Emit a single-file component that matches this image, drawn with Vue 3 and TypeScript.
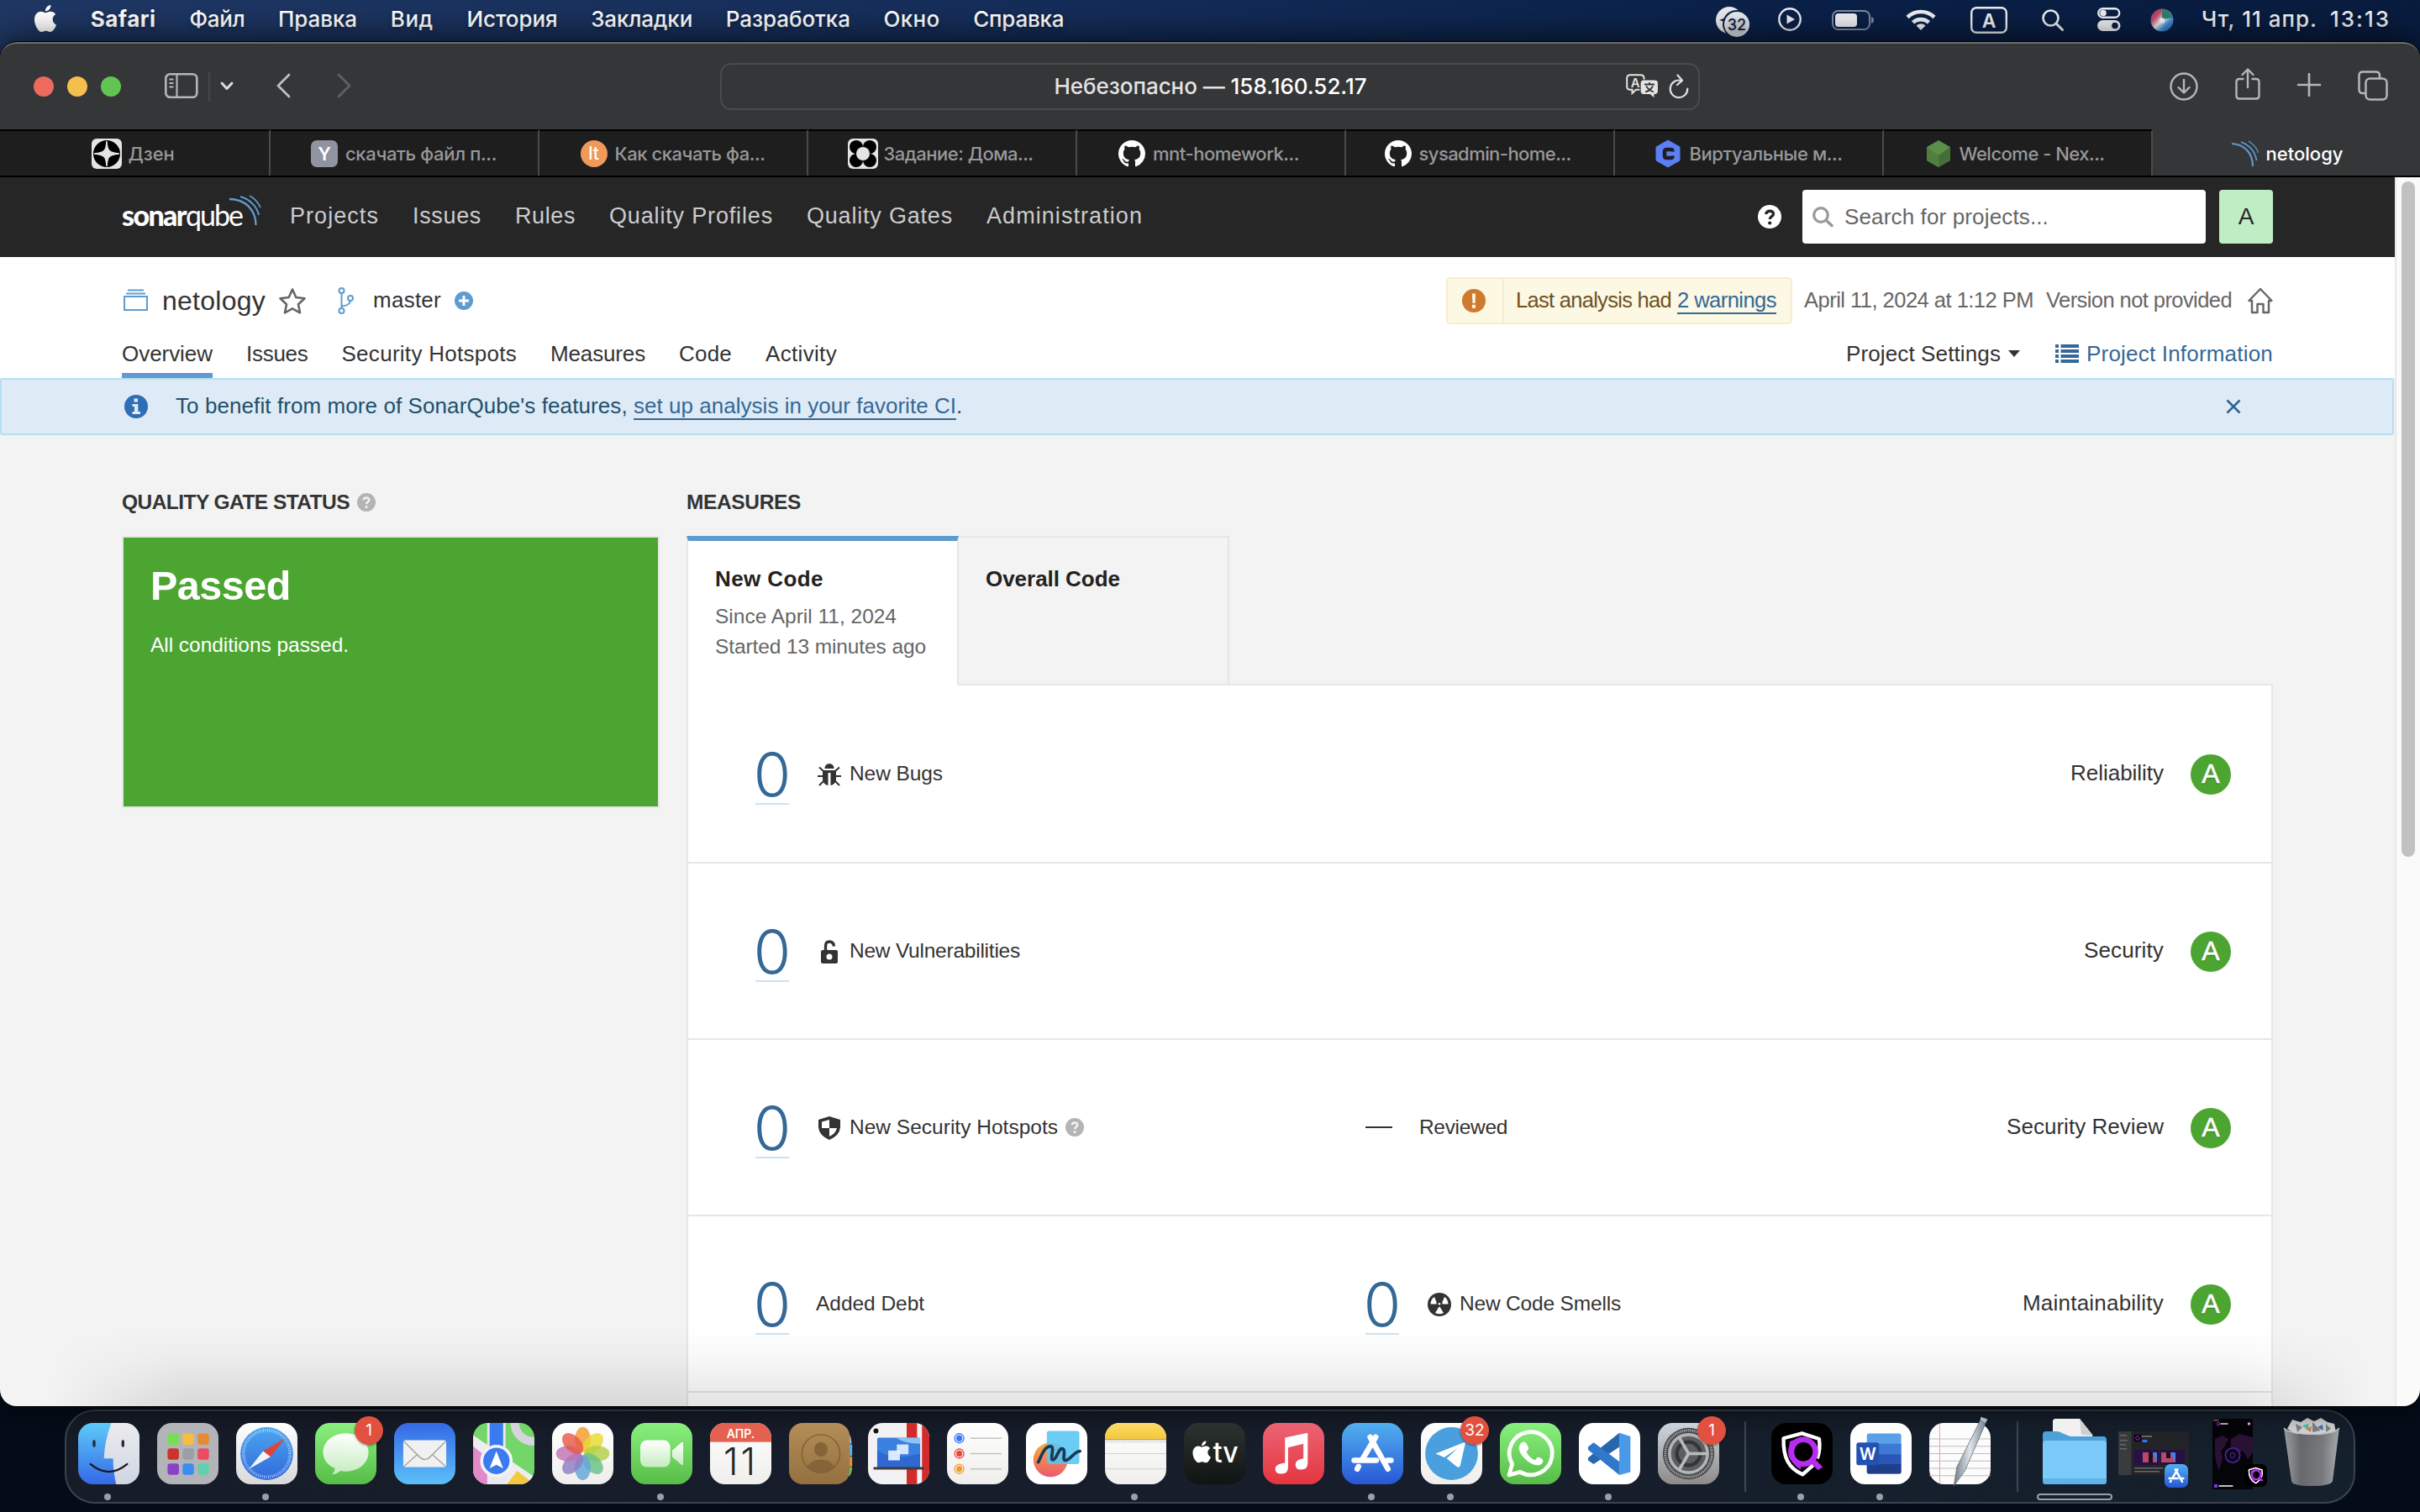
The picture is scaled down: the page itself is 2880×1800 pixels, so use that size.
<script setup lang="ts">
import type { Directive } from 'vue'

interface Label { text: string; width: number }
interface Measure { label: string; width: number; icon?: string; help?: boolean; empty?: boolean }
interface Row { left: Measure; right?: Measure; rating: Label }

// Spreads the letters of a label so that it takes the given width in pixels
const vFit: Directive<HTMLElement, number> = {
  mounted(el, { value }) {
    const count = (el.textContent ?? '').length
    const natural = el.getBoundingClientRect().width
    el.style.letterSpacing = `${(value - natural) / count}px`
  },
}

const menu: Label[] = [
  { text: 'Файл', width: 66 },
  { text: 'Правка', width: 94 },
  { text: 'Вид', width: 51 },
  { text: 'История', width: 108 },
  { text: 'Закладки', width: 121 },
  { text: 'Разработка', width: 148 },
  { text: 'Окно', width: 67 },
  { text: 'Справка', width: 108 },
]

const tabs = [
  { icon: 'zen', text: 'Дзен', width: 55 },
  { icon: 'y', text: 'скачать файл п...', width: 180 },
  { icon: 'lt', text: 'Как скачать фа...', width: 179 },
  { icon: 'flower', text: 'Задание: Дома...', width: 178 },
  { icon: 'github', text: 'mnt-homework...', width: 174 },
  { icon: 'github', text: 'sysadmin-home...', width: 181 },
  { icon: 'c', text: 'Виртуальные м...', width: 182 },
  { icon: 'nexus', text: 'Welcome - Nex...', width: 173 },
  { icon: 'waves', text: 'netology', width: 92 },
]

const mainNav: Label[] = [
  { text: 'Projects', width: 106 },
  { text: 'Issues', width: 82 },
  { text: 'Rules', width: 72 },
  { text: 'Quality Profiles', width: 195 },
  { text: 'Quality Gates', width: 174 },
  { text: 'Administration', width: 186 },
]

const projectNav: Label[] = [
  { text: 'Overview', width: 108 },
  { text: 'Issues', width: 73.5 },
  { text: 'Security Hotspots', width: 208.5 },
  { text: 'Measures', width: 113 },
  { text: 'Code', width: 63 },
  { text: 'Activity', width: 85 },
]

const rows: Row[] = [
  { left: { label: 'New Bugs', width: 111, icon: 'bug' }, rating: { text: 'Reliability', width: 111 } },
  { left: { label: 'New Vulnerabilities', width: 203, icon: 'lock' }, rating: { text: 'Security', width: 95 } },
  {
    left: { label: 'New Security Hotspots', width: 248, icon: 'shield', help: true },
    right: { label: 'Reviewed', width: 105, empty: true },
    rating: { text: 'Security Review', width: 187 },
  },
  {
    left: { label: 'Added Debt', width: 129 },
    right: { label: 'New Code Smells', width: 192, icon: 'smell' },
    rating: { text: 'Maintainability', width: 168 },
  },
]

const launchTiles = ['#77dd55', '#f6bd3f', '#e58a35', '#c9352b', '#9aa0a5', '#ea4d60', '#8c3fc9', '#3a8df2', '#63cfae']
const petals = ['#f39a2d', '#e8d92f', '#b3cf45', '#69bf88', '#63a6da', '#8d7cc4', '#c074b4', '#e8594a']
const reminders = ['#3478f6', '#e8483b', '#ef9a37']
const gearSpokes = [0, 120, 240]
</script>

<template>
  <div class="desktop">
    <svg class="defs" aria-hidden="true">
      <defs>
        <clipPath id="tile"><rect width="100" height="100" rx="24" /></clipPath>
        <linearGradient id="gFinder" x2="0" y2="1"><stop stop-color="#5ecbf8" /><stop offset="1" stop-color="#3468e8" /></linearGradient>
        <linearGradient id="gFace" x2="0" y2="1"><stop stop-color="#ececee" /><stop offset="1" stop-color="#cfd6e2" /></linearGradient>
        <linearGradient id="gWhite" x2="0" y2="1"><stop stop-color="#ffffff" /><stop offset="1" stop-color="#d9d9da" /></linearGradient>
        <linearGradient id="gPaper" x2="0" y2="1"><stop stop-color="#ffffff" /><stop offset="1" stop-color="#efeeec" /></linearGradient>
        <linearGradient id="gBlue" x2="0" y2="1"><stop stop-color="#4ba6ee" /><stop offset="1" stop-color="#3269dc" /></linearGradient>
        <linearGradient id="gGreen" x2="0" y2="1"><stop stop-color="#89f07f" /><stop offset="1" stop-color="#57bd47" /></linearGradient>
        <linearGradient id="gMail" x2="0" y2="1"><stop stop-color="#3568e6" /><stop offset="1" stop-color="#5cc0f8" /></linearGradient>
        <linearGradient id="gBubble" x2="0" y2="1"><stop stop-color="#ffffff" /><stop offset="1" stop-color="#c5ecbf" /></linearGradient>
        <linearGradient id="gContacts" x2="0" y2="1"><stop stop-color="#b38e58" /><stop offset="1" stop-color="#94703f" /></linearGradient>
        <linearGradient id="gMusic" x2="0" y2="1"><stop stop-color="#ec6374" /><stop offset="1" stop-color="#e4363f" /></linearGradient>
        <linearGradient id="gStore" x2="0" y2="1"><stop stop-color="#51b0ef" /><stop offset="1" stop-color="#2857d6" /></linearGradient>
        <linearGradient id="gTv" x2="0" y2="1"><stop stop-color="#2b332f" /><stop offset="1" stop-color="#101413" /></linearGradient>
        <linearGradient id="gNotes" x2="0" y2="1"><stop stop-color="#fbdc6c" /><stop offset="1" stop-color="#f5c63a" /></linearGradient>
        <linearGradient id="gGear" x2="0" y2="1"><stop stop-color="#ccd6de" /><stop offset="1" stop-color="#8e8b88" /></linearGradient>
        <linearGradient id="gFree" x2="0" y2="1"><stop stop-color="#f3ae3d" /><stop offset="1" stop-color="#ec5a6e" /></linearGradient>
        <linearGradient id="gTrash" x2="1" y2="0"><stop stop-color="#a9abad" /><stop offset=".3" stop-color="#6d6f72" /><stop offset=".7" stop-color="#7f8183" /><stop offset="1" stop-color="#b4b6b8" /></linearGradient>
        <linearGradient id="gPen" x2="1" y2="0"><stop stop-color="#6e7b87" /><stop offset=".5" stop-color="#dfe6ec" /><stop offset="1" stop-color="#75808b" /></linearGradient>
        <linearGradient id="gSiri" x2="1" y2="1"><stop stop-color="#7a2d63" /><stop offset=".3" stop-color="#c9506c" /><stop offset=".5" stop-color="#e8e4ee" /><stop offset=".7" stop-color="#3e8fd0" /><stop offset="1" stop-color="#2a4fb0" /></linearGradient>
        <symbol id="apple" viewBox="0 0 24 24">
          <path d="M12.152 6.896c-.948 0-2.415-1.078-3.96-1.04-2.04.027-3.91 1.183-4.961 3.014-2.117 3.675-.546 9.103 1.519 12.09 1.013 1.454 2.208 3.09 3.792 3.039 1.52-.065 2.09-.987 3.935-.987 1.831 0 2.35.987 3.96.948 1.637-.026 2.676-1.48 3.676-2.948 1.156-1.688 1.636-3.325 1.662-3.415-.039-.013-3.182-1.221-3.22-4.857-.026-3.04 2.48-4.494 2.597-4.559-1.429-2.09-3.623-2.324-4.39-2.376-2-.156-3.675 1.09-4.61 1.09zM15.53 3.83c.843-1.012 1.4-2.427 1.245-3.83-1.207.052-2.662.805-3.532 1.818-.78.896-1.454 2.338-1.273 3.714 1.338.104 2.715-.688 3.559-1.701" />
        </symbol>
        <symbol id="store" viewBox="0 0 100 100">
          <rect width="100" height="100" rx="24" fill="url(#gStore)" />
          <g stroke="#fff" stroke-width="9" stroke-linecap="round" fill="none">
            <path d="M55 23L33 60M46 23L75 75M20 61H56M74 61H80M27 71L25 75" />
          </g>
        </symbol>
        <symbol id="vpn" viewBox="0 0 100 100">
          <rect width="100" height="100" rx="24" fill="#000" />
          <path d="M68 69L51 84C28 74 19 56 20 25L50 17L78 26C80 40 78 50 75 58" fill="none" stroke="#fff" stroke-width="6" stroke-linejoin="round" />
          <circle cx="52" cy="47" r="20" fill="none" stroke="#b82cf2" stroke-width="9" />
          <path d="M30 30L48 24V32C34 38 34 56 48 64V76C34 68 27 55 30 30ZM62 62L70 58L84 72L76 77Z" fill="#b82cf2" />
        </symbol>
        <symbol id="help" viewBox="0 0 22 22">
          <circle cx="11" cy="11" r="11" fill="#b4b4b4" />
          <path d="M7.800 8.300C8 4.500 14.300 4.600 14.300 8.200C14.300 10.600 11 10.400 11 13.200" fill="none" stroke="#f3f3f3" stroke-width="2.400" />
          <circle cx="11" cy="16.600" r="1.600" fill="#f3f3f3" />
        </symbol>
      </defs>
    </svg>

    <div class="menubar">
      <svg class="apple" viewBox="0 0 24 24"><use href="#apple" /></svg>
      <span v-fit="78" class="t app-name">Safari</span>
      <span v-for="m in menu" :key="m.text" v-fit="m.width" class="t">{{ m.text }}</span>
      <div class="status">
        <svg width="40" height="36" viewBox="0 0 40 36">
          <circle cx="16" cy="16" r="16" fill="#e8eaee" />
          <path d="M4 16L25 8L22 24L15 20L19 14L11 18Z" fill="#0b2146" />
          <circle cx="24.500" cy="20.500" r="16.500" fill="#0b2146" />
          <circle cx="25" cy="21" r="15" fill="#e8eaee" />
          <text x="25" y="27.500" text-anchor="middle" class="ui" font-size="18" font-weight="500" fill="#0b2146">32</text>
        </svg>
        <svg width="28" height="28" viewBox="0 0 28 28"><circle cx="14" cy="14" r="12.700" fill="none" stroke="#eceef2" stroke-width="2.400" /><path d="M10.500 8.500L20 14L10.500 19.500Z" fill="#eceef2" /></svg>
        <svg width="50" height="24" viewBox="0 0 50 24"><rect x="1" y="1" width="44" height="22" rx="6.500" fill="none" stroke="#7f8aa0" stroke-width="2" /><rect x="4" y="4" width="26" height="16" rx="4" fill="#eceef2" /><path d="M47 8Q50 9 50 12T47 16Z" fill="#7f8aa0" /></svg>
        <svg width="36" height="26" viewBox="0 0 36 26"><g fill="none" stroke="#eceef2" stroke-width="4.600"><path d="M2 10.500A23 23 0 0 1 34 10.500" /><path d="M8.500 16.800A14 14 0 0 1 27.500 16.800" /></g><path d="M12.500 20.500A8 8 0 0 1 23.500 20.500L18 26Z" fill="#eceef2" /></svg>
        <svg width="44" height="32" viewBox="0 0 44 32"><rect x="1.200" y="1.200" width="41.600" height="29.600" rx="6" fill="none" stroke="#eceef2" stroke-width="2.400" /><text x="22" y="24.500" text-anchor="middle" class="ui" font-size="23" font-weight="600" fill="#eceef2">A</text></svg>
        <svg width="26" height="26" viewBox="0 0 26 26"><circle cx="10.500" cy="10.500" r="9" fill="none" stroke="#eceef2" stroke-width="2.600" /><path d="M17 17L24.500 24.500" stroke="#eceef2" stroke-width="3" stroke-linecap="round" /></svg>
        <svg width="28" height="28" viewBox="0 0 28 28"><rect x="1.200" y="1.200" width="25" height="10.600" rx="5.300" fill="none" stroke="#eceef2" stroke-width="2.400" /><circle cx="7" cy="6.500" r="3.800" fill="#eceef2" /><rect y="15" width="27.500" height="13" rx="6.500" fill="#eceef2" /><circle cx="21" cy="21.500" r="3.800" fill="#0a1f45" /></svg>
        <svg width="28" height="28" viewBox="0 0 28 28"><circle cx="14" cy="14" r="13.500" fill="url(#gSiri)" /><path d="M14 .5A13.500 13.500 0 0 1 27 11L14 13Z" fill="#2f7f6e" /><circle cx="14" cy="14.500" r="3.500" fill="#fff" opacity=".7" /></svg>
        <span v-fit="138" class="t">Чт, 11 апр.</span>
        <span v-fit="72" class="t">13:13</span>
      </div>
    </div>

    <div class="window">
      <div class="toolbar">
        <div class="lights"><i class="red"></i><i class="yellow"></i><i class="green"></i></div>
        <svg class="side" width="40" height="30" viewBox="0 0 40 30"><rect x="1.300" y="1.300" width="37" height="27.400" rx="5" fill="none" stroke="#b5b6b7" stroke-width="2.600" /><path d="M14.500 1V29" stroke="#b5b6b7" stroke-width="2.200" /><path d="M5.500 7.500H10.500M5.500 12H10.500M5.500 16.500H10.500" stroke="#b5b6b7" stroke-width="2" /></svg>
        <div class="vline"></div>
        <svg class="chev" width="16" height="11" viewBox="0 0 16 11"><path d="M2 2L8 8.500L14 2" fill="none" stroke="#dcdcdc" stroke-width="3" stroke-linecap="round" stroke-linejoin="round" /></svg>
        <svg class="back" width="18" height="30" viewBox="0 0 18 30"><path d="M16 2L3 15L16 28" fill="none" stroke="#bfc0c1" stroke-width="2.800" stroke-linecap="round" stroke-linejoin="round" /></svg>
        <svg class="fwd" width="18" height="30" viewBox="0 0 18 30"><path d="M2 2L15 15L2 28" fill="none" stroke="#5f6062" stroke-width="2.800" stroke-linecap="round" stroke-linejoin="round" /></svg>
        <div class="address">
          <span v-fit="372" class="t">Небезопасно — <b>158.160.52.17</b></span>
          <div class="address-tools">
            <svg width="40" height="30" viewBox="0 0 40 30"><path d="M5 1.200H17.500Q21.500 1.200 21.500 5V15Q21.500 18.800 17.500 18.800H12L7.500 23V18.800H5Q1.200 18.800 1.200 15V5Q1.200 1.200 5 1.200Z" fill="none" stroke="#e4e4e4" stroke-width="2" /><text x="11.300" y="15.500" text-anchor="middle" class="ui" font-size="15" font-weight="600" fill="#e4e4e4">A</text><path d="M21 7H34Q38.500 7 38.500 11V20.500Q38.500 24.500 34 24.500V29.500L28.500 24.500H21Q17 24.500 17 20.500V11Q17 7 21 7Z" fill="#e4e4e4" stroke="#353638" stroke-width="1.200" /><path d="M22 12.500H34M28 10V12.500M24 14.500Q28 20 33 21.500M32 14.500Q29 20 23 21.500" fill="none" stroke="#353638" stroke-width="1.800" /></svg>
            <svg width="24" height="30" viewBox="0 0 24 30"><path d="M15 8A10.300 10.300 0 1 0 22.300 17.500" fill="none" stroke="#e0e0e0" stroke-width="2.200" stroke-linecap="round" /><path d="M10.500 1.500L16 7.800L10 13" fill="none" stroke="#e0e0e0" stroke-width="2.200" stroke-linecap="round" stroke-linejoin="round" /></svg>
          </div>
        </div>
        <div class="tools">
          <svg width="34" height="34" viewBox="0 0 34 34"><g fill="none" stroke="#b5b6b7" stroke-width="2.400" stroke-linecap="round" stroke-linejoin="round"><circle cx="17" cy="17" r="15.500" /><path d="M17 9V24M10.500 18L17 24.500L23.500 18" /></g></svg>
          <svg width="30" height="38" viewBox="0 0 30 38"><g fill="none" stroke="#b5b6b7" stroke-width="2.400" stroke-linecap="round" stroke-linejoin="round"><path d="M9.500 13H5Q1.500 13 1.500 16.500V33Q1.500 36.500 5 36.500H25Q28.500 36.500 28.500 33V16.500Q28.500 13 25 13H20.500M15 23V2M8.500 8L15 1.500L21.500 8" /></g></svg>
          <svg width="28" height="28" viewBox="0 0 28 28"><path d="M14 1V27M1 14H27" stroke="#b5b6b7" stroke-width="2.600" stroke-linecap="round" /></svg>
          <svg width="36" height="36" viewBox="0 0 36 36"><g fill="none" stroke="#b5b6b7" stroke-width="2.500"><rect x="9.500" y="9.500" width="25" height="25" rx="5" /><path d="M9.500 27H6Q1.500 27 1.500 22.500V6Q1.500 1.500 6 1.500H21.500Q26 1.500 26 6V9.500" /></g></svg>
        </div>
      </div>

      <div class="tabs">
        <div v-for="(tab, i) in tabs" :key="i" class="tab" :class="[`tab-${tab.icon}`, { active: i === 8 }]">
          <svg v-if="tab.icon === 'zen'" width="36" height="36" viewBox="0 0 36 36"><rect width="36" height="36" rx="6" fill="#e4e4e4" /><circle cx="18" cy="18" r="16" fill="#000" /><path d="M18 3C18.500 14 20 17 33 18C20 19 18.500 22 18 33C17.500 22 16 19 3 18C16 17 17.500 14 18 3Z" fill="#e4e4e4" stroke="#e4e4e4" stroke-width="1.500" /></svg>
          <svg v-else-if="tab.icon === 'y'" width="32" height="32" viewBox="0 0 32 32"><rect width="32" height="32" rx="7" fill="#9193a0" /><text x="16" y="24" text-anchor="middle" class="ui" font-size="22" font-weight="600" fill="#fff">Y</text></svg>
          <svg v-else-if="tab.icon === 'lt'" width="32" height="32" viewBox="0 0 32 32"><circle cx="16" cy="16" r="16" fill="#f0995a" /><text x="15.500" y="23" text-anchor="middle" class="ui" font-size="21" font-weight="500" fill="#fff">lt</text></svg>
          <svg v-else-if="tab.icon === 'flower'" width="36" height="36" viewBox="0 0 36 36"><rect width="36" height="36" rx="6" fill="#e4e4e4" /><circle cx="10" cy="10" r="8" /><circle cx="26" cy="10" r="8" /><circle cx="10" cy="26" r="8" /><circle cx="26" cy="26" r="8" /><circle cx="18" cy="18" r="8" fill="#e4e4e4" /></svg>
          <svg v-else-if="tab.icon === 'github'" width="32" height="32" viewBox="0 0 16 16"><path fill="#fff" d="M8 0C3.580 0 0 3.580 0 8c0 3.540 2.290 6.530 5.470 7.590.4.070.55-.17.55-.38 0-.19-.01-.82-.01-1.490-2.010.37-2.530-.49-2.690-.94-.09-.23-.48-.94-.82-1.130-.28-.15-.68-.52-.01-.53.63-.01 1.080.58 1.230.82.72 1.210 1.870.87 2.330.66.07-.52.28-.87.51-1.070-1.780-.2-3.640-.89-3.640-3.950 0-.87.31-1.590.82-2.150-.08-.2-.36-1.020.08-2.120 0 0 .67-.21 2.200.82.64-.18 1.320-.27 2-.27.68 0 1.360.09 2 .27 1.530-1.040 2.200-.82 2.200-.82.44 1.100.16 1.920.08 2.120.51.56.82 1.270.82 2.150 0 3.070-1.870 3.750-3.650 3.950.29.25.54.73.54 1.480 0 1.070-.01 1.930-.01 2.200 0 .21.15.46.55.38A8.013 8.013 0 0016 8c0-4.420-3.580-8-8-8z" /></svg>
          <svg v-else-if="tab.icon === 'c'" width="30" height="32" viewBox="0 0 30 32"><path d="M15 0L29 8V24L15 32L1 24V8Z" fill="#5b7ff5" stroke="#5b7ff5" stroke-linejoin="round" /><path d="M20.500 13.500V13Q20.500 11 18 11H13.500Q11 11 11 13.500V18.500Q11 21 13.500 21H18Q20.500 21 20.500 19V18.500" fill="none" stroke="#1e1e1e" stroke-width="4.500" /></svg>
          <svg v-else-if="tab.icon === 'nexus'" width="30" height="32" viewBox="0 0 30 32"><path d="M15 0L29 8V24L15 32L1 24V8Z" fill="#5b8f4a" /><path d="M15 18L29 8V24L15 32Z" fill="#456f38" /><path d="M15 18L1 8V24L15 32Z" fill="#4f8040" /></svg>
          <svg v-else width="32" height="32" viewBox="0 0 32 32"><g fill="none" stroke="#5f9bd0"><path d="M0 4C16 5 25 16 25 31" stroke-width="2.200" /><path d="M11 2C21 6 28 14 29.500 24" stroke-width="1.700" /><path d="M20 1C26 5 30 9 31.500 15" stroke-width="1.300" /></g></svg>
          <span v-fit="tab.width" class="t">{{ tab.text }}</span>
        </div>
      </div>

      <div class="viewport">
        <div class="page">
          <div class="sonar-nav">
            <div class="logo">
              <span v-fit="76" class="t sonar">sonar</span><span v-fit="67" class="t qube">qube</span>
              <svg width="38" height="36" viewBox="0 0 38 36"><g fill="none" stroke="#5f9bd0"><path d="M0 5C18 5 31.500 17 31.500 36" stroke-width="2.400" /><path d="M13 2C24 5 33 14 35 24" stroke-width="2" /><path d="M24 1C30 4 34 9 37 15" stroke-width="1.700" /></g></svg>
            </div>
            <nav><span v-for="n in mainNav" :key="n.text" v-fit="n.width" class="t">{{ n.text }}</span></nav>
            <svg class="nav-help" width="28" height="28" viewBox="0 0 28 28"><circle cx="14" cy="14" r="14" fill="#fff" /><path d="M9.800 11C10 6 18.500 6 18.500 10.800C18.500 13.800 14.200 13.600 14.200 17" fill="none" stroke="#262626" stroke-width="3.400" /><circle cx="14.200" cy="21.500" r="2.100" fill="#262626" /></svg>
            <div class="search">
              <svg width="25" height="24" viewBox="0 0 25 24"><circle cx="10" cy="10" r="8.300" fill="none" stroke="#999" stroke-width="3.200" /><path d="M16 16L23 22.500" stroke="#999" stroke-width="3.600" stroke-linecap="round" /></svg>
              <span v-fit="243" class="t">Search for projects...</span>
            </div>
            <div class="avatar">A</div>
          </div>

          <header class="project">
            <div class="project-top">
              <svg class="cube" width="29" height="28" viewBox="0 0 29 28"><g fill="none" stroke="#5e9bd1" stroke-width="2"><path d="M5 1.500H24M3 5.500H26" /><rect x="1" y="9" width="27" height="16" /></g></svg>
              <span v-fit="123" class="t name">netology</span>
              <svg class="star" width="34" height="32" viewBox="0 0 34 32"><path d="M17 2.500L21.300 12L31.500 13.200L24 20.200L26 30.300L17 25.300L8 30.300L10 20.200L2.500 13.200L12.700 12Z" fill="none" stroke="#666" stroke-width="2.600" stroke-linejoin="round" /></svg>
              <svg class="branch" width="20" height="32" viewBox="0 0 20 32"><g fill="none" stroke="#5e9bd1" stroke-width="2"><circle cx="4.500" cy="4" r="3" /><circle cx="4.500" cy="28" r="3" /><circle cx="15" cy="13" r="3" /><path d="M4.500 7V25M15 16Q14.500 21.500 5 22.500" /></g></svg>
              <span v-fit="81" class="t master">master</span>
              <svg class="plus" width="22" height="22" viewBox="0 0 22 22"><circle cx="11" cy="11" r="11" fill="#5e9bd1" /><path d="M11 5V17M5 11H17" stroke="#fff" stroke-width="3" /></svg>
              <div class="meta">
                <div class="warn">
                  <div class="warn-icon"><svg width="28" height="28" viewBox="0 0 28 28"><circle cx="14" cy="14" r="14" fill="#d07a2f" /><path d="M12 5.500H16L15.500 17H12.500Z" fill="#fcf8e3" /><rect x="12" y="18.800" width="4" height="4" fill="#fcf8e3" /></svg></div>
                  <span v-fit="185" class="t">Last analysis had</span>
                  <span v-fit="118" class="t link">2 warnings</span>
                </div>
                <span v-fit="273" class="t date">April 11, 2024 at 1:12 PM</span>
                <span v-fit="221" class="t version">Version not provided</span>
                <svg class="home" width="32" height="32" viewBox="0 0 32 32"><path d="M2.500 16L16 2L29.500 16H26V30H19.500V20H12.500V30H6V16Z" fill="none" stroke="#666" stroke-width="2.400" stroke-linejoin="round" /></svg>
              </div>
            </div>
            <div class="project-bottom">
              <span v-for="(n, i) in projectNav" :key="n.text" class="ptab" :class="{ on: i === 0 }"><span v-fit="n.width" class="t">{{ n.text }}</span></span>
              <div class="project-links">
                <span v-fit="184" class="t">Project Settings</span>
                <svg class="caret" width="14" height="8" viewBox="0 0 14 8"><path d="M0 0H14L7 8Z" fill="#333" /></svg>
                <svg class="list" width="28" height="24" viewBox="0 0 28 24"><path d="M0 3H4M0 9H4M0 15H4M0 21H4M6.500 3H28M6.500 9H28M6.500 15H28M6.500 21H28" stroke="#346896" stroke-width="4" /></svg>
                <span v-fit="222" class="t info-link">Project Information</span>
              </div>
            </div>
          </header>

          <div class="alert">
            <svg width="28" height="28" viewBox="0 0 28 28"><circle cx="14" cy="14" r="14" fill="#2e6eb5" /><path d="M11.500 4.500H16V8.500H11.500ZM9.500 11H16.300V20H19V23H9.500V20H12V14H9.500Z" fill="#deebf6" /></svg>
            <span v-fit="545" class="t">To benefit from more of SonarQube's features, </span><span v-fit="384" class="t link">set up analysis in your favorite CI</span><span class="t">.</span>
            <svg class="close" width="18" height="18" viewBox="0 0 18 18"><path d="M1.500 1.500L16.500 16.500M16.500 1.500L1.500 16.500" stroke="#2f6592" stroke-width="2.600" /></svg>
          </div>

          <main>
            <section class="gate">
              <h2><span v-fit="271" class="t">QUALITY GATE STATUS</span><svg class="help-icon" width="22" height="22"><use href="#help" /></svg></h2>
              <div class="card">
                <span v-fit="167" class="t passed">Passed</span>
                <span v-fit="236" class="t conditions">All conditions passed.</span>
              </div>
            </section>
            <section class="measures">
              <h2><span v-fit="136" class="t">MEASURES</span></h2>
              <div class="code-tabs">
                <div class="code-tab selected">
                  <strong><span v-fit="129" class="t">New Code</span></strong>
                  <p><span v-fit="216" class="t">Since April 11, 2024</span></p>
                  <p><span v-fit="251" class="t">Started 13 minutes ago</span></p>
                </div>
                <div class="code-tab"><strong><span v-fit="160" class="t">Overall Code</span></strong></div>
                <div class="tab-rest"></div>
              </div>
              <div class="panel">
                <div v-for="row in rows" :key="row.rating.text" class="row">
                  <div v-for="(m, k) in [row.left, row.right]" :key="k" class="measure">
                    <template v-if="m">
                      <i v-if="m.empty" class="dash"></i>
                      <span v-else class="zero">0</span>
                      <svg v-if="m.icon" class="micon" width="28" height="28" viewBox="0 0 28 28">
                        <g v-if="m.icon === 'bug'"><path d="M8.500 6.500A5.500 5.500 0 0 1 19.500 6.500V7H8.500ZM6 9H22V20Q21 26 15.500 27V12H12.500V27Q7 26 6 20Z" fill="#333" /><path d="M7 10L2 5.500M21 10L26 5.500M7 16H0M21 16H28M8 21L2 27M20 21L26 27" stroke="#333" stroke-width="2" /></g>
                        <g v-else-if="m.icon === 'lock'"><path d="M9.500 13V7.500Q9.500 2 14 2Q19 2 19.500 7.500" fill="none" stroke="#333" stroke-width="3.400" /><path fill-rule="evenodd" d="M6 12H22Q24 12 24 14V26Q24 28 22 28H6Q4 28 4 26V14Q4 12 6 12ZM14 16.500A3.500 3.500 0 1 0 14 23.500A3.500 3.500 0 1 0 14 16.500Z" fill="#333" /></g>
                        <g v-else-if="m.icon === 'shield'"><path d="M14 0L27 4V13Q26 23 14 28Q2 23 1 13V4Z" fill="#333" /><path d="M14 4V14H5V6.500ZM14 14H23Q21.500 20.500 14 24Z" fill="#fff" /></g>
                        <g v-else><circle cx="14" cy="14" r="14" fill="#333" /><g fill="#fff"><path d="M11.500 13.500H3.500Q4 7 8 5Z" /><path d="M16.500 13.500H24.500Q24 7 20 5Z" /><path d="M14 16L19 24Q14 26.500 9 24Z" /></g><circle cx="14" cy="13.300" r="3.600" fill="#333" /><circle cx="14" cy="13.300" r="1.300" fill="#fff" /></g>
                      </svg>
                      <span v-fit="m.width" class="t mlabel" :class="{ plain: !m.icon }">{{ m.label }}</span>
                      <svg v-if="m.help" class="help-icon" width="22" height="22"><use href="#help" /></svg>
                    </template>
                  </div>
                  <div class="rating"><span v-fit="row.rating.width" class="t">{{ row.rating.text }}</span><b>A</b></div>
                </div>
              </div>
            </section>
          </main>
        </div>
        <div class="scrollbar"><div class="thumb"></div></div>
      </div>
      <div class="shade"></div>
    </div>

    <div class="dock">
      <div class="app run">
        <svg viewBox="0 0 100 100"><g clip-path="url(#tile)"><rect width="100" height="100" fill="url(#gFinder)" /><path d="M54 0Q43 30 42 58H57Q57 80 62 100H100V0Z" fill="url(#gFace)" /></g><path d="M26 30V37M73 30V37" stroke="#1f2a38" stroke-width="4.500" stroke-linecap="round" /><path d="M20 67Q50 92 80 67" fill="none" stroke="#15181d" stroke-width="3" stroke-linecap="round" /></svg>
      </div>
      <div class="app">
        <svg viewBox="0 0 100 100"><rect width="100" height="100" rx="24" fill="#b2b4b8" /><rect v-for="(c, i) in launchTiles" :key="c" :x="17 + (i % 3) * 24.500" :y="17 + Math.floor(i / 3) * 24.500" width="18.500" height="18.500" rx="4.500" :fill="c" /></svg>
      </div>
      <div class="app run">
        <svg viewBox="0 0 100 100"><rect width="100" height="100" rx="24" fill="url(#gWhite)" /><circle cx="50" cy="50" r="43" fill="url(#gBlue)" /><circle cx="50" cy="50" r="38" fill="none" stroke="#cfe4fa" stroke-width="5" stroke-dasharray="1 2.320" /><path d="M80 25L44 46L56 55Z" fill="#e0433a" /><path d="M21 75L44 46L56 55Z" fill="#f4f4f4" /></svg>
      </div>
      <div class="app">
        <svg viewBox="0 0 100 100"><rect width="100" height="100" rx="24" fill="url(#gGreen)" /><path d="M50 17C72 17 87 31 87 48S72 79 50 79Q45 79 41 78Q36 83 27 84Q33 79 32 74C20 69 13 59 13 48C13 31 28 17 50 17Z" fill="url(#gBubble)" /></svg>
        <span class="badge">1</span>
      </div>
      <div class="app">
        <svg viewBox="0 0 100 100"><rect width="100" height="100" rx="24" fill="url(#gMail)" /><rect x="15" y="28" width="70" height="44" rx="4" fill="#f1f1f1" /><path d="M16 30L42 56Q50 63 58 56L84 30M16 71L37 52M84 71L63 52" fill="none" stroke="#a5a5a5" stroke-width="2" /></svg>
      </div>
      <div class="app">
        <svg viewBox="0 0 100 100"><g clip-path="url(#tile)"><rect width="100" height="100" fill="#74d668" /><path d="M0 20L100 88V100H0Z" fill="#ededf0" /><path d="M0 38L40 70V100H0Z" fill="#e08ac9" /><path d="M55 100L72 78L100 100Z" fill="#f3c93f" /><circle cx="98" cy="0" r="30" fill="none" stroke="#d5d5dd" stroke-width="14" /><path d="M23 0H53V100H23Z" fill="#e9e9ee" /><path d="M27 0H49V60H27Z" fill="#3a7cf0" /></g><circle cx="38" cy="62" r="24" fill="#3a7cf0" stroke="#f2f3f8" stroke-width="5" /><path d="M38 46L49 74L38 68L27 74Z" fill="#fff" /></svg>
      </div>
      <div class="app">
        <svg viewBox="0 0 100 100"><rect width="100" height="100" rx="24" fill="url(#gPaper)" /><ellipse v-for="(c, i) in petals" :key="c" cx="50" cy="27" rx="13" ry="20.500" :fill="c" opacity=".82" :transform="`rotate(${i * 45} 50 50)`" /></svg>
      </div>
      <div class="app run">
        <svg viewBox="0 0 100 100"><rect width="100" height="100" rx="24" fill="url(#gGreen)" /><rect x="15" y="28" width="49" height="44" rx="11" fill="url(#gBubble)" /><path d="M67 45L82 32Q85 30 85 34V66Q85 70 82 68L67 55Z" fill="url(#gBubble)" /></svg>
      </div>
      <div class="app">
        <svg viewBox="0 0 100 100"><g clip-path="url(#tile)"><rect width="100" height="100" fill="url(#gPaper)" /><rect width="100" height="31" fill="#e4604f" /></g><text x="50" y="24" text-anchor="middle" class="ui" font-size="20" font-weight="600" fill="#fff" textLength="46" lengthAdjust="spacingAndGlyphs">АПР.</text><text x="48" y="85" text-anchor="middle" class="ui" font-size="61" font-weight="300" fill="#262626" textLength="52">11</text></svg>
      </div>
      <div class="app">
        <svg viewBox="0 0 100 100"><path d="M88 14Q102 14 102 34H88Z" fill="#aeb3b8" /><path d="M88 35H103V54H88Z" fill="#54b4ee" /><path d="M88 55H103V71H88Z" fill="#f0902f" /><path d="M88 72H103Q102 86 96 88H88Z" fill="#5ccf60" /><rect width="99" height="100" rx="22" fill="url(#gContacts)" /><g fill="none" stroke="#7f6035" stroke-width="2"><circle cx="52" cy="50" r="31" /></g><ellipse cx="52" cy="43" rx="11" ry="12" fill="#846438" /><path d="M30 71Q36 60 52 60T74 71Q65 82 52 82T30 71Z" fill="#846438" /></svg>
      </div>
      <div class="app">
        <svg viewBox="0 0 100 100"><g clip-path="url(#tile)"><rect width="100" height="100" fill="#f2f2f4" /><path d="M63 0H80V100H63ZM88 0H100V100H88Z" fill="#d32b2b" /></g><circle cx="13" cy="13" r="4" fill="#111" /><rect x="15" y="24" width="70" height="49" rx="3" fill="#3b7fe0" /><path d="M15 45Q40 62 85 50V73H15Z" fill="#2f68d2" /><path d="M45 24H85V34Q60 34 45 24Z" fill="#8cc4f2" /><rect x="33" y="45" width="19" height="16" fill="#dbe9fb" /><rect x="47" y="35" width="19" height="16" fill="#e7f1fd" opacity=".9" /><rect x="9" y="72" width="82" height="4" rx="1" fill="#3b3c40" /></svg>
      </div>
      <div class="app">
        <svg viewBox="0 0 100 100"><rect width="100" height="100" rx="24" fill="url(#gPaper)" /><g v-for="(c, i) in reminders" :key="c"><circle cx="20" :cy="25 + i * 25" r="7.500" fill="#fff" :stroke="c" stroke-width="1.800" /><circle cx="20" :cy="25 + i * 25" r="5" :fill="c" /><rect x="38" :y="24 + i * 25" width="51" height="2" fill="#c2c2c2" /></g></svg>
      </div>
      <div class="app">
        <svg viewBox="0 0 100 100"><rect width="100" height="100" rx="24" fill="#fff" /><circle cx="40" cy="60" r="28" fill="url(#gFree)" /><rect x="34" y="13" width="53" height="54" rx="4" fill="#56c5f2" opacity=".88" /><path d="M20 64C26 52 30 38 40 38C48 38 38 60 44 60C51 60 52 40 60 42C66 44 58 60 64 61C72 62 78 46 88 46" fill="none" stroke="#15395c" stroke-width="5" stroke-linecap="round" /></svg>
      </div>
      <div class="app run">
        <svg viewBox="0 0 100 100"><g clip-path="url(#tile)"><rect width="100" height="100" fill="url(#gPaper)" /><rect width="100" height="26" fill="url(#gNotes)" /><path d="M0 27H100" stroke="#b0a88f" stroke-width="2" /><path d="M2 31H100" stroke="#bdbdbd" stroke-width="2" stroke-dasharray="2 2" /><path d="M0 50H100M0 75H100" stroke="#d5d4d2" stroke-width="1.500" /></g></svg>
      </div>
      <div class="app">
        <svg viewBox="0 0 100 100"><rect width="100" height="100" rx="24" fill="url(#gTv)" /><use href="#apple" x="11" y="29" width="36" height="36" fill="#fff" /><text x="68" y="64" text-anchor="middle" class="ui" font-size="46" font-weight="500" fill="#fff" textLength="41" lengthAdjust="spacingAndGlyphs">tv</text></svg>
      </div>
      <div class="app">
        <svg viewBox="0 0 100 100"><rect width="100" height="100" rx="24" fill="url(#gMusic)" /><path d="M36 24L73 16V66Q73 76 62 76Q53 76 53 68Q53 60 66 58V34L41 40V73Q41 83 30 83Q20 83 20 75Q20 67 36 65Z" fill="#fff" /></svg>
      </div>
      <div class="app run"><svg viewBox="0 0 100 100"><use href="#store" width="100" height="100" /></svg></div>
      <div class="app run">
        <svg viewBox="0 0 100 100"><rect width="100" height="100" rx="24" fill="url(#gPaper)" /><circle cx="50" cy="50" r="43" fill="#4a9fdf" /><path d="M24 50L70 32Q73 31 72 35L64 70Q62 74 58 71L42 58L60 41L38 56Z" fill="#fff" /></svg>
        <span class="badge">32</span>
      </div>
      <div class="app">
        <svg viewBox="0 0 100 100"><rect width="100" height="100" rx="24" fill="url(#gGreen)" /><path d="M15 85L20 67A35 35 0 1 1 33 80Z" fill="none" stroke="#fff" stroke-width="6.500" stroke-linejoin="round" /><path d="M36 32Q40 29 43 33L47 41Q46 45 43 47Q47 56 57 61L61 56Q65 55 70 60Q72 64 66 68Q58 71 46 63Q32 52 31 41Q32 34 36 32Z" fill="#fff" /></svg>
      </div>
      <div class="app run">
        <svg viewBox="0 0 100 100"><rect width="100" height="100" rx="24" fill="#fff" /><path d="M66 16L84 22V80L66 85Z" fill="#4a98e8" /><path d="M66 16V39L24 67L15 61V57Z" fill="#2765ac" /><path d="M66 85V63L24 32L15 39V44Z" fill="#3177cb" /></svg>
      </div>
      <div class="app">
        <svg viewBox="0 0 100 100"><rect width="100" height="100" rx="24" fill="url(#gGear)" /><circle cx="50" cy="50" r="42" fill="#46474a" /><circle cx="50" cy="50" r="38" fill="none" stroke="#a7a9ab" stroke-width="4" stroke-dasharray="1.800 1.500" /><circle cx="50" cy="50" r="31" fill="#5d5e60" stroke="#b2b4b6" stroke-width="5" /><circle cx="50" cy="50" r="19" fill="none" stroke="#343537" stroke-width="6" /><path v-for="a in gearSpokes" :key="a" d="M50 50H81" stroke="#b9bbbd" stroke-width="5" :transform="`rotate(${a} 50 50)`" /></svg>
        <span class="badge">1</span>
      </div>
      <div class="sep"></div>
      <div class="app run"><svg viewBox="0 0 100 100"><use href="#vpn" width="100" height="100" /></svg></div>
      <div class="app run">
        <svg viewBox="0 0 100 100"><rect width="100" height="100" rx="24" fill="#fff" /><rect x="27" y="17" width="56" height="66" rx="4" fill="#5aa0e8" /><path d="M27 34H83V51H27Z" fill="#3d79d2" /><path d="M27 51H83V67H27Z" fill="#2a56b5" /><path d="M27 67H83V79Q83 83 79 83H31Q27 83 27 79Z" fill="#1f3f8c" /><rect x="10" y="32" width="37" height="37" rx="4" fill="#2450b2" /><text x="28.500" y="60" text-anchor="middle" class="ui" font-size="27" font-weight="600" fill="#fff">W</text></svg>
      </div>
      <div class="app">
        <svg viewBox="0 0 100 100"><rect width="100" height="100" rx="24" fill="#fcfcfc" /><path d="M0 26H100M0 38H100M0 50H100M0 62H100M0 74H100M0 86H100" stroke="#bdbdbd" stroke-width="1.500" /><path d="M17 1V99" stroke="#eea9a3" stroke-width="1.500" /><path d="M83 -4L92 0L58 78L40 103L45 72Z" fill="url(#gPen)" stroke="#58636e" stroke-width="1" /><path d="M84 -10L95 -6L92 0L83 -4Z" fill="#9fb9cf" /></svg>
      </div>
      <div class="sep second"></div>
      <div class="folder">
        <svg width="76" height="82" viewBox="0 0 76 82"><path d="M12 3L14 1H44L59 20V40H12Z" fill="#f1f1f1" /><path d="M44 1L60 21L46 20Z" fill="#cfcfcf" /><path d="M0 20Q0 16 4 16H17Q20 16 23 18L30 21Q32 22 35 22H72Q76 22 76 26V60H0Z" fill="#4ba1d8" /><rect y="27" width="76" height="52" rx="4" fill="#7bcafa" /><path d="M0 72H76V75Q76 79 72 79H4Q0 79 0 75Z" fill="#5db4e8" /></svg>
      </div>
      <div class="thumb-app">
        <svg width="84" height="68" viewBox="0 0 84 68"><rect width="84" height="52" fill="#232427" /><rect width="15.500" height="52" fill="#3a3b3e" /><g fill="#66686b"><rect x="2" y="4" width="8" height="1.500" /><rect x="2" y="10" width="9" height="1.500" /><rect x="2" y="15" width="7" height="1.500" /><rect x="2" y="20" width="8" height="1.500" /><rect x="28" y="5" width="12" height="2" /><rect x="19" y="43" width="34" height="1.500" /><rect x="19" y="47" width="30" height="1.500" /></g><rect x="19" y="4" width="8" height="8" rx="2" fill="#000" /><circle cx="23" cy="8" r="2.300" fill="none" stroke="#b82cf2" /><rect x="28.500" y="10" width="6" height="3" rx="1" fill="#3478f6" /><rect x="19" y="22" width="29" height="18" fill="#261047" /><rect x="50" y="22" width="29" height="18" fill="#261047" /><path d="M29 25H46V37H29Z" fill="#b8486a" /><path d="M51 25H68V37H51Z" fill="#b8486a" /><path d="M41 25H46V37Z" fill="#4383e8" /><path d="M62 25H68V37Z" fill="#4383e8" /><path d="M36 25H41V37H36ZM57 25H62V32H57Z" fill="#16121f" /><use href="#store" x="55" y="39" width="28" height="28" /></svg>
      </div>
      <div class="thumb-vpn">
        <svg width="64" height="84" viewBox="0 0 64 84"><rect width="48" height="84" fill="#050409" /><path d="M3 24L12 20L19 24L14 34L10 38L12 46L8 62L4 50L3 40ZM22 24L32 18L48 22V40L42 48L36 38L30 42L26 52L22 40Z" fill="#2a1236" /><circle cx="24" cy="43.500" r="8.700" fill="#0a0812" stroke="#5a21b5" stroke-width="1.600" /><circle cx="24" cy="43.500" r="2.800" fill="none" stroke="#5a21b5" /><circle cx="7" cy="6" r="1.800" fill="none" stroke="#b82cf2" /><rect x="9.500" y="5" width="9" height="2" fill="#b9b9b9" /><circle cx="43.500" cy="6" r="1.700" fill="#d0d0d0" /><g><circle cx="1.800" cy="1.700" r=".9" fill="#ed6a5e" /><circle cx="4.200" cy="1.700" r=".9" fill="#f5bf4f" /><circle cx="6.600" cy="1.700" r=".9" fill="#61c554" /></g><rect x="2" y="78" width="4" height="4" fill="#7a35d8" /><rect x="7.500" y="79" width="17" height="2" fill="#bdbdbd" /><use href="#vpn" x="38" y="54" width="27" height="27" /></svg>
      </div>
      <div class="trash">
        <svg width="66" height="84" viewBox="0 0 66 84"><path d="M4 14L10 3L20 6L28 1L36 5L44 1L52 6L60 8L62 18L44 22L14 20Z" fill="#d9dadb" /><path d="M14 8L22 12L16 18ZM34 6L44 16L34 18ZM50 8L56 14L50 18Z" fill="#80868c" /><path d="M22 10L30 8L28 15Z" fill="#4cc7ae" /><path d="M40 12L46 9L47 16Z" fill="#4f6fb5" /><path d="M26 14L33 11L32 18Z" fill="#dd8046" /><path d="M0 13Q6 21 33 21T66 13L58 76Q56 82 33 82T9 76Z" fill="url(#gTrash)" opacity=".93" /><path d="M0 13Q6 20 33 20T66 13" fill="none" stroke="#c9cbcd" stroke-width="1.400" /></svg>
      </div>
    </div>
  </div>
</template>

<style>
body { margin: 0; overflow: hidden; background: #050d1a; }
</style>

<style scoped>
* { box-sizing: border-box; }
svg { display: block; flex: none; overflow: visible; }
.defs { position: absolute; width: 0; height: 0; }
.ui { font-family: Inter, "Noto Sans", sans-serif; }
.t { display: inline-block; white-space: pre; flex: none; }

.desktop {
  display: flex;
  flex-direction: column;
  width: 2880px;
  height: 1800px;
  overflow: hidden;
  font-family: Inter, "Noto Sans", sans-serif;
  background:
    linear-gradient(90deg, #1f3763 0%, #142c58 45%, #0a2047 75%, #091c3e 100%) 0 0 / 100% 80px no-repeat,
    linear-gradient(#0a1a38, #040c18);
}

.menubar { display: flex; align-items: center; gap: 39.7px; height: 50px; flex: none; padding: 0 35px 5px 38px; color: #fff; font-size: 26px; font-weight: 500; text-shadow: 0 2px 5px rgba(0, 0, 0, .35); }
.apple { width: 32px; height: 32px; fill: #fff; margin: -2px -2px 0 0; }
.app-name { font-weight: 700; }
.status { display: flex; align-items: center; margin-left: auto; color: #eceef2; }
.status > :nth-child(1) { margin-top: 6px; }
.status > :nth-child(2) { margin-left: 34px; }
.status > :nth-child(3) { margin-left: 36px; margin-top: 2px; }
.status > :nth-child(4) { margin-left: 38px; margin-top: 1px; }
.status > :nth-child(5) { margin-left: 41px; margin-top: 2px; }
.status > :nth-child(6) { margin-left: 41px; margin-top: 2px; }
.status > :nth-child(7) { margin-left: 40px; margin-top: 1px; }
.status > :nth-child(8) { margin-left: 35px; margin-top: 2px; }
.status > :nth-child(9) { margin-left: 33px; }
.status > :nth-child(10) { margin-left: 15px; }

.window { position: relative; display: flex; flex-direction: column; height: 1624px; flex: none; border-radius: 20px; overflow: hidden; background: #353638; box-shadow: 0 0 0 1px #000, 0 0 40px rgba(0, 0, 0, .8); border-top: 2px solid #6c6d6f; }
.toolbar { display: flex; align-items: center; height: 102px; flex: none; padding: 0 38px 1px 40px; }
.lights { display: flex; gap: 16px; width: 156px; }
.lights i { width: 24px; height: 24px; border-radius: 50%; }
.red { background: #ed6a5e; }
.yellow { background: #f5bf4f; }
.green { background: #61c554; }
.side { margin-top: -2px; }
.vline { width: 2px; height: 36px; margin-left: 12px; background: #454648; }
.chev { margin-left: 12px; }
.back { margin: -2px 0 0 50px; }
.fwd { margin: -2px 0 0 55px; }
.address { position: relative; display: flex; align-items: center; justify-content: center; width: 1166px; height: 56px; margin-left: 438px; padding-left: 1px; border: 2px solid #4a4b4d; border-radius: 13px; color: #e3e3e4; font-size: 26px; font-weight: 500; }
.address b { color: #fff; font-weight: 500; }
.address-tools { position: absolute; right: 11px; top: 11px; display: flex; gap: 11px; }
.tools { display: flex; align-items: center; margin-left: auto; gap: 44px; }
.tools svg:nth-child(2) { margin-top: -6px; }
.tools svg:nth-child(3) { margin-top: -3px; }
.tools svg:nth-child(4) { margin-top: -2px; }

.tabs { display: flex; height: 57px; flex: none; border-bottom: 2px solid #000; background: #1e1e1e; }
.tab { display: flex; align-items: center; justify-content: center; gap: 9px; width: 320px; border-right: 2px solid #4a4a4b; border-top: 2px solid #000; padding-right: 1px; color: #98989a; font-size: 22px; font-weight: 500; }
.tab-zen { width: 322px; padding-right: 4px; gap: 8px; }
.tab-flower { padding-right: 4px; gap: 7px; }
.tab-github { padding-right: 5px; }
.tab-c { gap: 11px; padding-right: 0; }
.tab-nexus { padding-right: 6px; gap: 10px; }
.tab.active { width: 318px; background: #353638; border-color: #353638; color: #fff; padding: 0 0 0 4px; }

.viewport { display: flex; flex: 1; min-height: 0; overflow: hidden; font-family: "Liberation Sans", Arial, sans-serif; font-size: 26px; color: #333; }
.page { width: 2850px; flex: none; background: #f3f3f3; overflow: hidden; }
.scrollbar { flex: 1; border-left: 2px solid #e8e8e8; background: #fafafa; padding: 5px 0 0 6px; }
.thumb { width: 16px; height: 804px; border-radius: 8px; background: #c1c1c1; }

.sonar-nav { display: flex; align-items: center; height: 95px; background: #262626; color: #ccc; padding-left: 145px; }
.logo { display: flex; align-items: center; width: 200px; font-family: Lato, sans-serif; font-size: 34px; color: #fff; }
.logo svg { margin: -17px 0 0 -15px; }
.sonar { font-weight: 900; }
.qube { font-weight: 400; }
.logo .t { margin-top: -6px; }
.sonar-nav nav { display: flex; gap: 40px; font-size: 27px; }
.sonar-nav nav .t { margin-top: -2px; }
.nav-help { margin-left: 732px; margin-top: -1px; }
.search { display: flex; align-items: center; gap: 13px; width: 480px; height: 64px; margin: -1px 0 0 25px; padding-left: 12px; border-radius: 4px; background: #fff; color: #666; }
.avatar { width: 64px; height: 64px; line-height: 64px; margin: -1px 0 0 16px; text-align: center; border-radius: 4px; background: #bfeec4; color: #262626; font-size: 28px; }

.project { height: 144px; padding: 24px 144px 0 145px; background: #fff; }
.project-top { display: flex; align-items: center; height: 56px; }
.cube { margin-left: 2px; }
.name { margin-left: 17px; font-size: 32px; }
.star { margin-left: 15px; }
.branch { margin-left: 37px; }
.master { margin-left: 22px; margin-top: -2px; }
.plus { margin-left: 16px; }
.meta { display: flex; align-items: center; margin-left: auto; color: #666; font-size: 25.5px; }
.warn { display: flex; align-items: center; width: 412px; height: 56px; border: 2px solid #faebcc; border-radius: 5px; background: #fcf8e3; color: #6f5126; }
.warn-icon { display: flex; align-items: center; justify-content: center; width: 67px; height: 52px; padding-right: 3px; border-right: 2px solid #faebcc; margin-right: 14px; }
.warn .t, .meta > .t { line-height: 30px; margin-top: -2px; }
.warn .link { margin-left: 7px; }
.link { color: #346896; box-shadow: 0 2px 0 #346896; }
.date { margin-left: 14px; }
.version { margin-left: 15px; }
.home { margin-left: 18px; }
.project-bottom { display: flex; align-items: flex-end; gap: 40px; height: 64px; }
.ptab { height: 52px; line-height: 46px; }
.ptab.on { border-bottom: 6px solid #5e9bd1; }
.project-links { display: flex; align-items: center; height: 46px; margin: 0 1px 6px auto; }
.caret { margin-left: 9px; }
.list { margin-left: 42px; }
.info-link { margin-left: 9px; color: #346896; }

.alert { display: flex; align-items: center; height: 68px; padding: 0 180px 0 146px; border: 2px solid #b5dff3; border-radius: 3px; margin-right: 1px; background: #deebf6; color: #20506c; }
.alert > svg:first-child { margin-right: 33px; }
.alert .t { line-height: 30px; margin-top: -2px; }
.alert .close { margin-left: auto; }

main { display: flex; gap: 32px; padding: 68px 145px 0 145px; }
h2 { display: flex; align-items: center; height: 24px; margin: 0 0 28px; font-size: 24.5px; line-height: 24px; font-weight: 700; }
.help-icon { margin-left: 9px; margin-top: -1px; }
.gate { width: 640px; }
.card { display: flex; flex-direction: column; align-items: flex-start; height: 324px; padding: 29px 32px; border: 2px solid #e6e6e6; background: #4ca531; color: #fff; }
.passed { font-size: 48.5px; line-height: 56px; font-weight: 700; }
.conditions { margin-top: 25px; font-size: 24.5px; line-height: 36px; }

.measures { width: 1888px; }
.code-tabs { display: flex; height: 176px; }
.code-tab { width: 322px; padding: 33px 32px 0; border: solid #e6e6e6; border-width: 2px 2px 0 0; font-size: 24.5px; color: #666; }
.code-tab.selected { position: relative; z-index: 1; width: 324px; height: 178px; padding-top: 29px; border-top: 6px solid #5e9bd1; border-left: 2px solid #e6e6e6; background: #fff; }
.tab-rest { flex: 1; }
strong { display: block; font-size: 26px; line-height: 32px; color: #222; margin-bottom: 11px; }
p { margin: 0; line-height: 36px; }
.panel { border: 2px solid #e6e6e6; background: #fff; height: 900px; }
.row { display: flex; align-items: center; height: 210px; border-bottom: 2px solid #e6e6e6; padding-left: 80px; }
.row:first-child { height: 212px; }
.measure { display: flex; align-items: center; width: 726px; font-size: 24.5px; }
.zero { display: flex; justify-content: center; width: 40px; height: 74px; line-height: 75px; font-family: Inter, Roboto, sans-serif; font-weight: 300; font-size: 72px; color: #346896; border-bottom: 2px solid #cae3f2; }
.micon { margin-left: 34px; margin-top: 2px; }
.mlabel { margin-left: 10px; }
.mlabel.plain { margin-left: 32px; }
.dash { width: 32px; height: 2px; background: #333; }
.rating { display: flex; align-items: center; margin-left: auto; padding-right: 48px; }
.rating .t { margin-top: -1px; }
.rating b { width: 48px; height: 48px; margin-left: 32px; margin-top: 2px; border-radius: 50%; background: #4ca531; color: #fff; text-align: center; line-height: 47px; font-size: 32px; font-weight: 400; text-shadow: 0 1px 2px rgba(0, 0, 0, .4); -webkit-text-stroke: .6px #fff; }
.shade { position: absolute; left: 60px; right: 60px; bottom: 0; height: 90px; background: linear-gradient(rgba(0, 0, 0, 0), rgba(0, 0, 0, .03) 40%, rgba(0, 0, 0, .11)); mask-image: linear-gradient(90deg, transparent, #000 160px, #000 calc(100% - 160px), transparent); }

.dock { display: flex; align-items: flex-start; width: 2726px; height: 112px; margin: 4px 0 0 77px; padding: 14px; border: 2px solid #3b434e; border-radius: 36px; background: linear-gradient(90deg, #161c28, #171d2b 50%, #15202d); }
.app { position: relative; width: 73px; height: 73px; margin-right: 21px; flex: none; }
.app svg { width: 73px; height: 73px; }
.app.run::after { content: ""; position: absolute; left: 31px; top: 84px; width: 8px; height: 8px; border-radius: 4px; background: #98a0ac; }
.badge { position: absolute; left: 47px; top: -8px; width: 34px; height: 34px; line-height: 34px; border-radius: 50%; background: #e2503f; color: #fff; font-size: 19px; text-align: center; box-shadow: 0 1px 3px rgba(0, 0, 0, .4); }
.sep { width: 2px; height: 84px; margin: -2px 30px 0 9px; background: #3f4753; flex: none; }
.sep.second { margin-left: 10px; margin-right: 29px; }
.folder { position: relative; margin: -6px 14px 0 0; flex: none; }
.folder::after { content: ""; position: absolute; left: -7px; top: 90px; width: 90px; height: 8px; box-sizing: border-box; border: 2px solid #98a0ac; border-radius: 4px; }
.thumb-app { margin: 10px 28px 0 0; flex: none; }
.thumb-vpn { margin: -5px 21px 0 0; flex: none; }
.trash { margin: -7px 0 0; flex: none; }
</style>
